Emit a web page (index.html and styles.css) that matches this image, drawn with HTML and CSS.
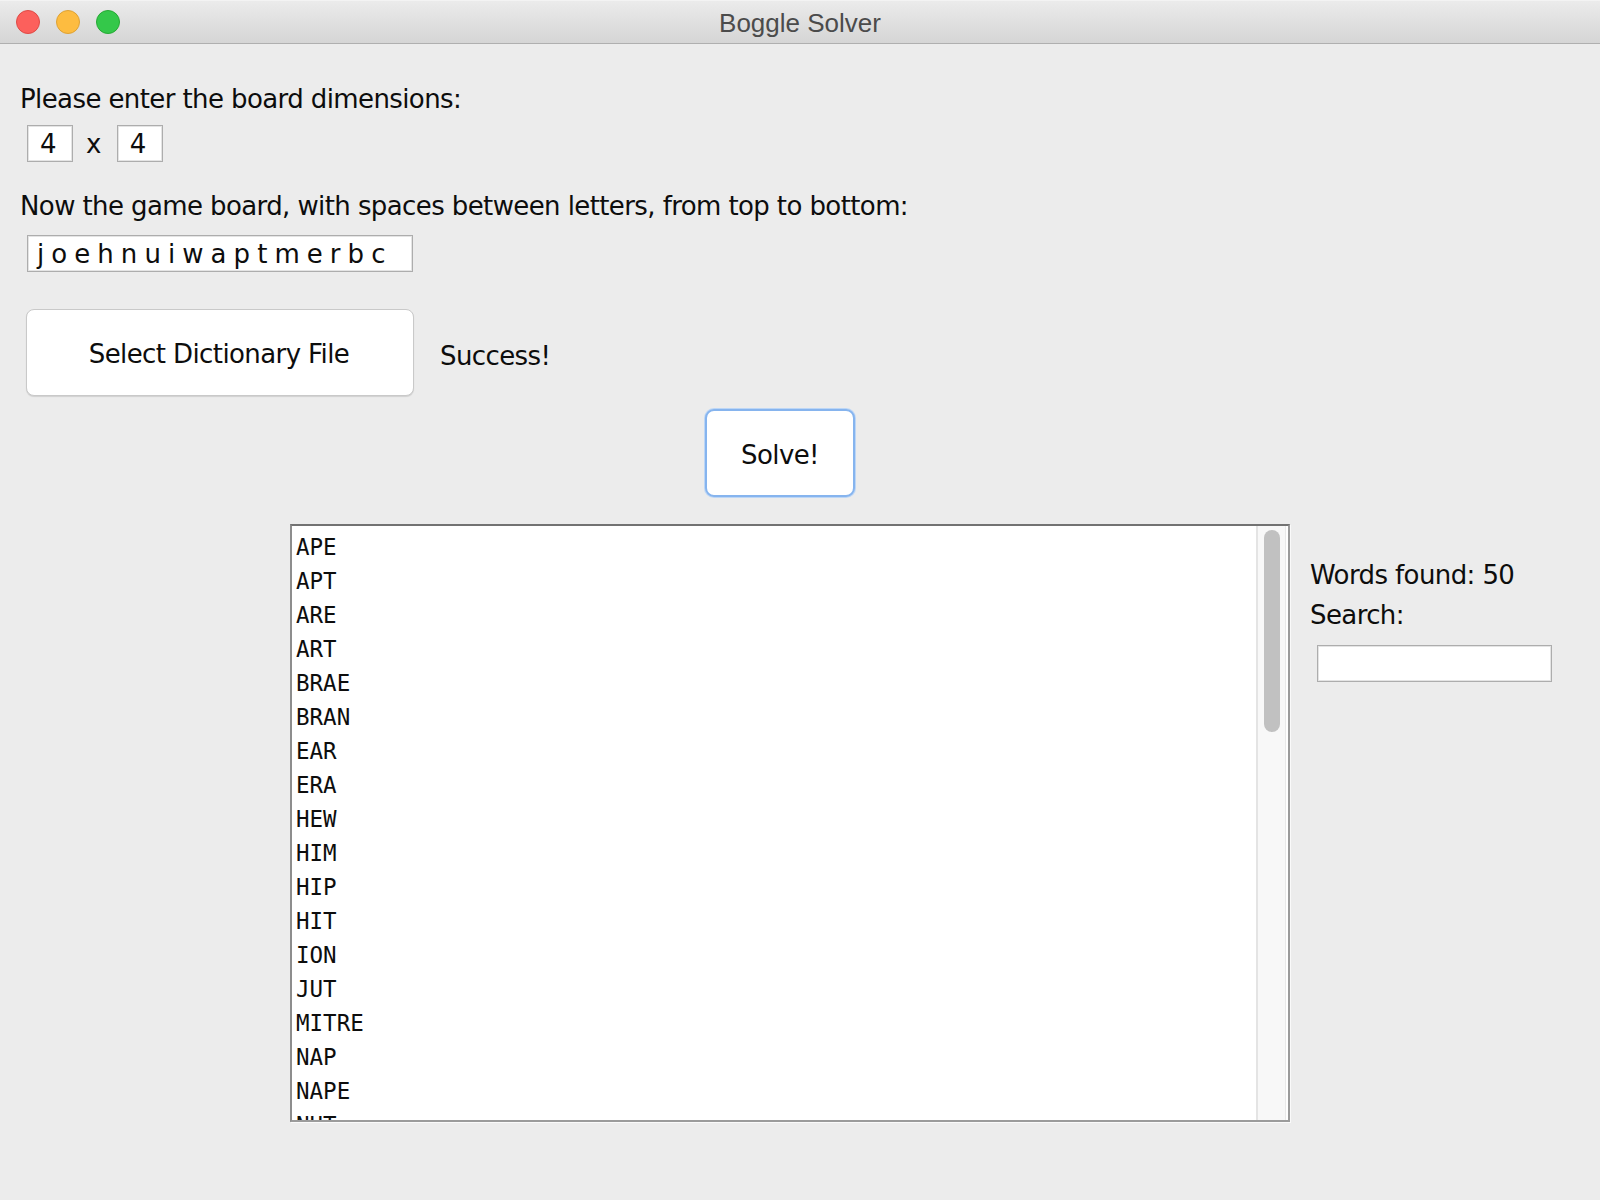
FILE: index.html
```html
<!DOCTYPE html>
<html lang="en">
<head>
<meta charset="utf-8">
<title>Boggle Solver</title>
<link rel="stylesheet" href="styles.css">
</head>
<body>
<div class="window">
  <header class="titlebar">
    <div class="lights">
      <span class="light red"></span>
      <span class="light yellow"></span>
      <span class="light green"></span>
    </div>
    <div class="title">Boggle Solver</div>
  </header>

  <main class="content">
    <div class="label label-first">Please enter the board dimensions:</div>
    <div class="dims">
      <div class="field small">4</div>
      <span class="times">x</span>
      <div class="field small">4</div>
    </div>

    <div class="label label-second">Now the game board, with spaces between letters, from top to bottom:</div>
    <div class="field board">j o e h n u i w a p t m e r b c</div>

    <div class="file-row">
      <div class="button select-btn">Select Dictionary File</div>
      <span class="label success">Success!</span>
    </div>

    <div class="button solve-btn">Solve!</div>

    <div class="results">
      <div class="list">
        <div class="items">
          <div class="item">APE</div>
          <div class="item">APT</div>
          <div class="item">ARE</div>
          <div class="item">ART</div>
          <div class="item">BRAE</div>
          <div class="item">BRAN</div>
          <div class="item">EAR</div>
          <div class="item">ERA</div>
          <div class="item">HEW</div>
          <div class="item">HIM</div>
          <div class="item">HIP</div>
          <div class="item">HIT</div>
          <div class="item">ION</div>
          <div class="item">JUT</div>
          <div class="item">MITRE</div>
          <div class="item">NAP</div>
          <div class="item">NAPE</div>
          <div class="item">NUT</div>
        </div>
        <div class="scrolltrack">
          <div class="thumb"></div>
        </div>
      </div>

      <aside class="side">
        <div class="label side-line">Words found: 50</div>
        <div class="label side-line search-label">Search:</div>
        <div class="field search"></div>
      </aside>
    </div>
  </main>
</div>
</body>
</html>
```

FILE: styles.css
```css
* {
  box-sizing: border-box;
}

html, body {
  margin: 0;
  padding: 0;
  background: #ececec;
}

.window {
  width: 1600px;
  height: 1200px;
  background: #ececec;
  overflow: hidden;
}

/* ---------- title bar ---------- */
.titlebar {
  position: relative;
  height: 44px;
  background: linear-gradient(#ebebeb, #d5d5d5);
  border-top: 1px solid #f3f3f3;
  border-bottom: 1px solid #afafaf;
  display: flex;
  align-items: center;
  justify-content: center;
}

.lights {
  position: absolute;
  left: 16px;
  top: 9px;
  display: flex;
  gap: 16px;
}

.light {
  width: 24px;
  height: 24px;
  border-radius: 50%;
  display: block;
}

.light.red {
  background: #fc605c;
  border: 1px solid #df4a45;
}

.light.yellow {
  background: #fdbc40;
  border: 1px solid #dea234;
}

.light.green {
  background: #34c84a;
  border: 1px solid #26a934;
}

.title {
  font-family: "Liberation Sans", Arial, sans-serif;
  font-size: 26px;
  color: #4b4b4b;
  line-height: 30px;
  margin-top: 1px;
}

/* ---------- content ---------- */
.content {
  padding-left: 20px;
}

.label {
  font-family: "DejaVu Sans", "Lucida Grande", sans-serif;
  font-size: 26px;
  letter-spacing: -0.6px;
  line-height: 30px;
  color: #0d0d0d;
}

.label-first {
  margin-top: 40px;
}

.dims {
  display: flex;
  align-items: center;
  margin-top: 11px;
  margin-left: 7px;
}

.field {
  background: #fff;
  border: 1px solid #adadad;
  box-shadow: inset 0 0 0 1px #e4e4e4;
  font-family: "DejaVu Sans", "Lucida Grande", sans-serif;
  font-size: 26px;
  letter-spacing: -0.6px;
  color: #0d0d0d;
  height: 37px;
  line-height: 37px;
}

.field.small {
  width: 46px;
  padding-left: 12px;
}

.times {
  font-family: "DejaVu Sans", sans-serif;
  font-size: 26px;
  letter-spacing: -0.6px;
  color: #0d0d0d;
  margin: 0 16px 0 13px;
  line-height: 30px;
}

.label-second {
  margin-top: 29px;
}

.field.board {
  width: 386px;
  margin-top: 14px;
  margin-left: 7px;
  padding-left: 9px;
  white-space: nowrap;
}

.file-row {
  display: flex;
  align-items: center;
  margin-top: 37px;
  margin-left: 6px;
}

.button {
  background: #fff;
  font-family: "DejaVu Sans", "Lucida Grande", sans-serif;
  font-size: 26px;
  letter-spacing: -0.6px;
  color: #0d0d0d;
  display: flex;
  align-items: center;
  justify-content: center;
}

.select-btn {
  width: 388px;
  height: 87px;
  border: 1px solid #c9c9c9;
  border-radius: 8px;
  box-shadow: 0 1px 1px rgba(0, 0, 0, 0.12);
  padding-top: 2px;
  padding-right: 2px;
}

.success {
  margin-left: 26px;
  margin-top: 6px;
}

.solve-btn {
  width: 150px;
  height: 88px;
  margin-top: 13px;
  margin-left: 685px;
  border: 2px solid #86b4ee;
  border-radius: 9px;
  box-shadow: 0 0 0 1px #bcd6f6;
  padding-top: 3px;
}

/* ---------- results ---------- */
.results {
  display: flex;
  align-items: flex-start;
  margin-top: 27px;
  margin-left: 270px;
}

.list {
  width: 1000px;
  height: 598px;
  background: #fff;
  border: 2px solid #9b9b9b;
  border-top-color: #727272;
  border-left-color: #8d8d8d;
  box-shadow: 1px 1px 0 #fafafa;
  display: flex;
  overflow: hidden;
}

.items {
  flex: 1;
  padding-top: 4px;
  padding-left: 4px;
  overflow: hidden;
}

.item {
  font-family: "DejaVu Sans Mono", monospace;
  font-size: 22.5px;
  line-height: 34px;
  height: 34px;
  color: #0d0d0d;
}

.scrolltrack {
  width: 32px;
  background: #f8f8f8;
  border-left: 2px solid #e4e4e4;
  border-right: 2px solid #ffffff;
  box-shadow: inset -1px 0 0 #e9e9e9;
  padding: 4px 0 0 6px;
}

.thumb {
  width: 16px;
  height: 202px;
  border-radius: 8px;
  background: #c1c1c1;
}

.side {
  margin-left: 20px;
  padding-top: 36px;
}

.search-label {
  margin-top: 10px;
}

.field.search {
  width: 235px;
  margin-top: 15px;
  margin-left: 7px;
}
```
